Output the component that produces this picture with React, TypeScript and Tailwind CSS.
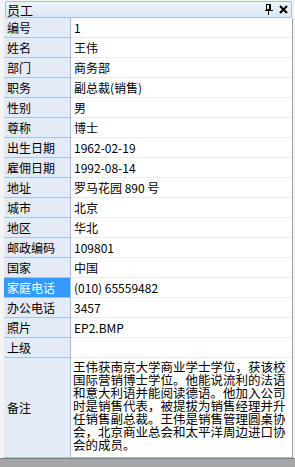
const rows: [string, string][] = [
  ["编号", "1"],
  ["姓名", "王伟"],
  ["部门", "商务部"],
  ["职务", "副总裁(销售)"],
  ["性别", "男"],
  ["尊称", "博士"],
  ["出生日期", "1962-02-19"],
  ["雇佣日期", "1992-08-14"],
  ["地址", "罗马花园 890 号"],
  ["城市", "北京"],
  ["地区", "华北"],
  ["邮政编码", "109801"],
  ["国家", "中国"],
  ["家庭电话", "(010) 65559482"],
  ["办公电话", "3457"],
  ["照片", "EP2.BMP"],
  ["上级", ""],
];

const memo = [
  "王伟获南京大学商业学士学位，获该校",
  "国际营销博士学位。他能说流利的法语",
  "和意大利语并能阅读德语。他加入公司",
  "时是销售代表，被提拔为销售经理并升",
  "任销售副总裁。王伟是销售管理圆桌协",
  "会，北京商业总会和太平洋周边进口协",
  "会的成员。",
];

function PinIcon() {
  return (
    <svg width="8" height="11" viewBox="0 0 8 11" shapeRendering="crispEdges">
      <rect x="1.5" y="0.5" width="4" height="5" fill="none" stroke="#000" />
      <rect x="4" y="0" width="2" height="6" fill="#000" />
      <rect x="0" y="6" width="8" height="1" fill="#000" />
      <rect x="3" y="7" width="1" height="4" fill="#000" />
    </svg>
  );
}

function CloseIcon() {
  return (
    <svg width="9" height="9" viewBox="0 0 9 9">
      <path d="M1 1 L8 8 M8 1 L1 8" stroke="#000" strokeWidth="2" />
    </svg>
  );
}

export default function App() {
  return (
    <div
      className="w-[295px] h-[467px] bg-[#f4f4f4] flex flex-col overflow-hidden text-black"
      style={{ fontFamily: '"Noto Sans CJK SC", "Liberation Sans", sans-serif' }}
    >
      <div className="pl-[5px] pr-[3px] pt-[1px]">
        <div className="h-[17px] flex items-center border border-[#a4bde3] rounded-[2px] bg-gradient-to-b from-[#eef3fb] to-[#dde7f6] pl-[1px] pr-[3px]">
          <span className="text-[13px] leading-none">员工</span>
          <div className="ml-auto flex items-center gap-[6px]">
            <PinIcon />
            <CloseIcon />
          </div>
        </div>
      </div>

      <div className="flex-1 flex flex-col pl-[4px]">
        <div className="flex flex-col bg-white border-r border-[#a0a0a0] mr-[2px]">
          {rows.map(([label, value]) => {
            const active = label === "家庭电话";
            return (
              <div key={label} className="flex h-[20px]">
                <div
                  className={
                    active
                      ? "w-[67px] shrink-0 border-r border-[#a4bde3] border-b border-b-[#a8c3e4] bg-[#3399ff] text-white text-[12px] leading-[19px] pl-[3px] whitespace-nowrap"
                      : "w-[67px] shrink-0 border-r border-[#a4bde3] border-b border-b-[#a8c3e4] bg-[#e3ebf7] text-[12px] leading-[19px] pl-[3px] whitespace-nowrap"
                  }
                >
                  {label}
                </div>
                <div className="flex-1 border-b border-[#ebebeb] text-[12px] leading-[19px] pl-[3px] whitespace-nowrap overflow-hidden">
                  {value}
                </div>
              </div>
            );
          })}
          <div className="flex h-[100px] border-b border-[#a4bde3]">
            <div className="w-[67px] shrink-0 border-r border-[#a4bde3] bg-[#e3ebf7] text-[12px] pl-[3px] flex items-center">
              备注
            </div>
            <div className="flex-1 pl-[2px] pt-[2px] text-[12.5px] leading-[13px] whitespace-nowrap overflow-hidden">
              {memo.map((line) => (
                <div key={line}>{line}</div>
              ))}
            </div>
          </div>
        </div>
      </div>
      <div className="h-[9px] bg-[#a6a6a6] border-t border-[#7f7f7f]" />
    </div>
  );
}
